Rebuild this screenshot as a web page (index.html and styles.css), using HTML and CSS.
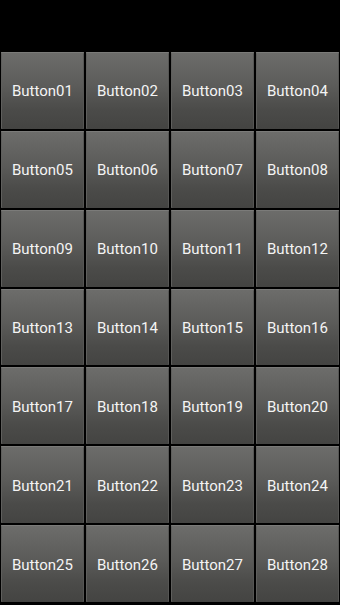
FILE: index.html
```html
<!DOCTYPE html>
<html>

<head lang="en">
    <meta charset="UTF-8">
    <title>Buttons</title>
    <link rel="stylesheet" href="styles.css">
</head>

<body>
    <div class="grid" id="grid">
        <a href="javascript:;" class="btn">Button01</a>
        <a href="javascript:;" class="btn">Button02</a>
        <a href="javascript:;" class="btn">Button03</a>
        <a href="javascript:;" class="btn">Button04</a>
        <a href="javascript:;" class="btn">Button05</a>
        <a href="javascript:;" class="btn">Button06</a>
        <a href="javascript:;" class="btn">Button07</a>
        <a href="javascript:;" class="btn">Button08</a>
        <a href="javascript:;" class="btn">Button09</a>
        <a href="javascript:;" class="btn">Button10</a>
        <a href="javascript:;" class="btn">Button11</a>
        <a href="javascript:;" class="btn">Button12</a>
        <a href="javascript:;" class="btn">Button13</a>
        <a href="javascript:;" class="btn">Button14</a>
        <a href="javascript:;" class="btn">Button15</a>
        <a href="javascript:;" class="btn">Button16</a>
        <a href="javascript:;" class="btn">Button17</a>
        <a href="javascript:;" class="btn">Button18</a>
        <a href="javascript:;" class="btn">Button19</a>
        <a href="javascript:;" class="btn">Button20</a>
        <a href="javascript:;" class="btn">Button21</a>
        <a href="javascript:;" class="btn">Button22</a>
        <a href="javascript:;" class="btn">Button23</a>
        <a href="javascript:;" class="btn">Button24</a>
        <a href="javascript:;" class="btn">Button25</a>
        <a href="javascript:;" class="btn">Button26</a>
        <a href="javascript:;" class="btn">Button27</a>
        <a href="javascript:;" class="btn">Button28</a>
    </div>
</body>

</html>
```

FILE: styles.css
```css
/*初始化 reset*/
html,
body {
    margin: 0;
    padding: 0;
    background: #000;
}

body {
    font: 15px/1.2 Roboto, "Noto Sans", sans-serif;
    color: #f4f4f4;
}

a {
    text-decoration: none;
    outline: none;
    cursor: pointer;
}

/*4列7行，按钮平分剩下的高度*/
.grid {
    box-sizing: border-box;
    height: 605px;
    padding: 52px 1px 3px 1px;
    display: grid;
    grid-template-columns: repeat(4, 83px);
    grid-template-rows: repeat(7, 1fr);
    gap: 2px;
}

.btn {
    display: flex;
    align-items: center;
    justify-content: center;
    padding-top: 2px;
    color: #f4f4f4;
    border-radius: 1px;
    background: linear-gradient(#6d6d6b, #5b5b59 45%, #4b4b49 75%, #444442);
    box-shadow: inset 0 1px 0 #7b7b79, inset 1px 0 0 #5f5f5d, inset -1px 0 0 #565654;
}
```
